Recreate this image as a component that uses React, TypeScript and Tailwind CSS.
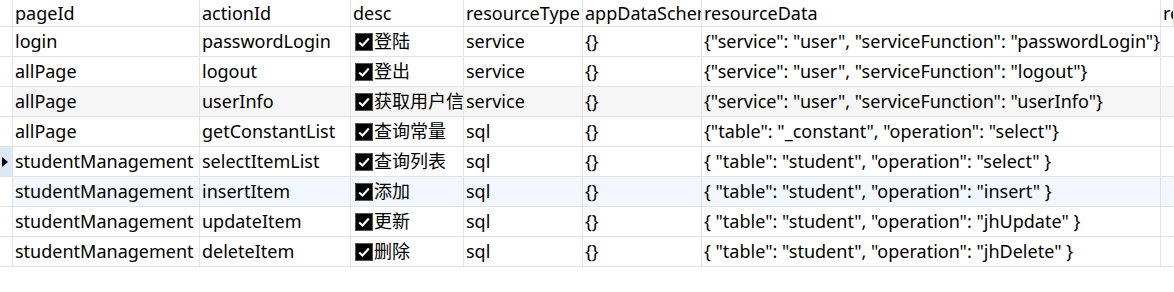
const columns = [
  { key: "pageId", label: "pageId", w: "w-[187px]" },
  { key: "actionId", label: "actionId", w: "w-[151px]" },
  { key: "desc", label: "desc", w: "w-[113px]" },
  { key: "resourceType", label: "resourceType", w: "w-[119px]" },
  { key: "appDataSchema", label: "appDataSchema", w: "w-[119px]" },
  { key: "resourceData", label: "resourceData", w: "w-[459px]" },
  { key: "resourceHook", label: "resourceHook", w: "flex-1" },
];

type Row = {
  pageId: string;
  actionId: string;
  desc: string;
  resourceType: string;
  appDataSchema: string;
  resourceData: string;
};

const rows: Row[] = [
  { pageId: "login", actionId: "passwordLogin", desc: "登陆", resourceType: "service", appDataSchema: "{}", resourceData: '{"service": "user", "serviceFunction": "passwordLogin"}' },
  { pageId: "allPage", actionId: "logout", desc: "登出", resourceType: "service", appDataSchema: "{}", resourceData: '{"service": "user", "serviceFunction": "logout"}' },
  { pageId: "allPage", actionId: "userInfo", desc: "获取用户信息", resourceType: "service", appDataSchema: "{}", resourceData: '{"service": "user", "serviceFunction": "userInfo"}' },
  { pageId: "allPage", actionId: "getConstantList", desc: "查询常量", resourceType: "sql", appDataSchema: "{}", resourceData: '{"table": "_constant", "operation": "select"}' },
  { pageId: "studentManagement", actionId: "selectItemList", desc: "查询列表", resourceType: "sql", appDataSchema: "{}", resourceData: '{ "table": "student", "operation": "select" }' },
  { pageId: "studentManagement", actionId: "insertItem", desc: "添加", resourceType: "sql", appDataSchema: "{}", resourceData: '{ "table": "student", "operation": "insert" }' },
  { pageId: "studentManagement", actionId: "updateItem", desc: "更新", resourceType: "sql", appDataSchema: "{}", resourceData: '{ "table": "student", "operation": "jhUpdate" }' },
  { pageId: "studentManagement", actionId: "deleteItem", desc: "删除", resourceType: "sql", appDataSchema: "{}", resourceData: '{ "table": "student", "operation": "jhDelete" }' },
];

function Check() {
  return (
    <span className="mr-[1px] flex h-[18px] w-[18px] shrink-0 items-center justify-center border border-[#555] bg-black">
      <svg viewBox="0 0 16 16" className="h-[14px] w-[14px]">
        <path d="M2.5 8.5 L6.3 12 L13.5 4" fill="none" stroke="white" strokeWidth="2.4" />
      </svg>
    </span>
  );
}

export default function App() {
  const current = 4;
  const hovered = 5;

  return (
    <div
      className="h-[292px] w-[1174px] overflow-hidden bg-white text-[18px] text-black"
      style={{ fontFamily: '"Noto Sans", "Noto Sans CJK SC", sans-serif' }}
    >
      <div className="flex h-[27px] border-b border-[#e3e3e3]">
        <div className="w-[13px] shrink-0 border-r border-[#e3e3e3]" />
        {columns.map((c) => (
          <div
            key={c.key}
            className={`${c.w} flex shrink-0 items-center overflow-hidden whitespace-nowrap border-r border-[#e3e3e3] pl-[2px] leading-none`}
          >
            {c.label}
          </div>
        ))}
      </div>

      {rows.map((r, i) => {
        const bg =
          i === hovered ? "bg-[#f2f7fd]" : i === 2 ? "bg-[#f6f6f6]" : "bg-white";
        return (
          <div key={i} className={`flex h-[30px] border-b border-[#e3e3e3] ${bg}`}>
            <div
              className={`flex w-[13px] shrink-0 items-center border-r border-[#e3e3e3] pl-[2px] ${
                i === current ? "bg-[#dde8f5]" : "bg-white"
              }`}
            >
              {i === current && (
                <svg viewBox="0 0 6 10" className="h-[10px] w-[6px]">
                  <path d="M0 0 L6 5 L0 10 Z" fill="black" />
                </svg>
              )}
            </div>
            <div className="flex w-[187px] shrink-0 items-center overflow-hidden whitespace-nowrap border-r border-[#e3e3e3] pl-[2px]">
              {r.pageId}
            </div>
            <div className="flex w-[151px] shrink-0 items-center overflow-hidden whitespace-nowrap border-r border-[#e3e3e3] pl-[2px]">
              {r.actionId}
            </div>
            <div className="flex w-[113px] shrink-0 items-center overflow-hidden whitespace-nowrap border-r border-[#e3e3e3] pl-[4px]">
              <Check />
              <span>{r.desc}</span>
            </div>
            <div className="flex w-[119px] shrink-0 items-center overflow-hidden whitespace-nowrap border-r border-[#e3e3e3] pl-[2px]">
              {r.resourceType}
            </div>
            <div className="flex w-[119px] shrink-0 items-center overflow-hidden whitespace-nowrap border-r border-[#e3e3e3] pl-[2px]">
              {r.appDataSchema}
            </div>
            <div className="flex w-[459px] shrink-0 items-center overflow-hidden whitespace-nowrap border-r border-[#e3e3e3] pl-[2px]">
              {r.resourceData}
            </div>
            <div className="flex-1" />
          </div>
        );
      })}
    </div>
  );
}
